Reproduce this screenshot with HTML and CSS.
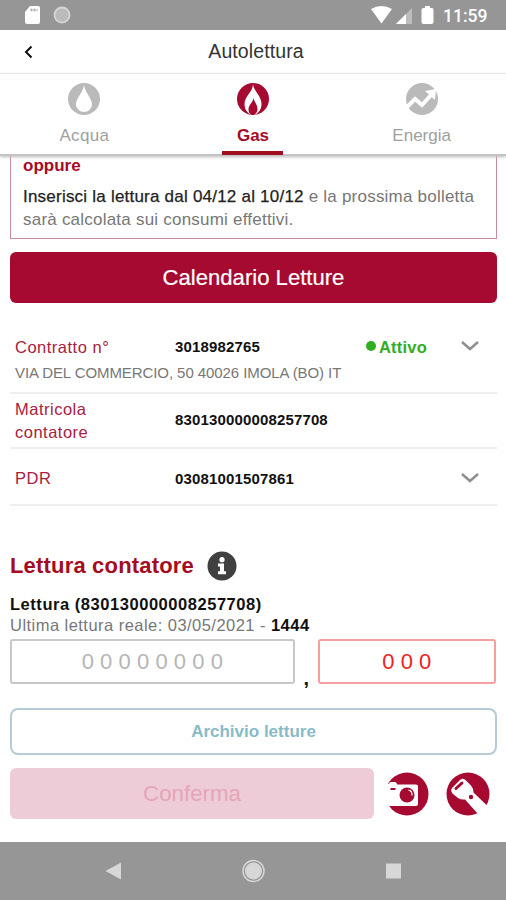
FILE: index.html
```html
<!DOCTYPE html>
<html lang="it">
<head>
<meta charset="utf-8">
<title>Autolettura</title>
<link rel="stylesheet" href="styles.css">
</head>
<body>
<div class="status">
  <svg class="status-left" width="60" height="30" viewBox="0 0 60 30"><path fill="#fff" d="M10 6h8q2 0 2 2v14q0 2-2 2H7q-2 0-2-2V12z"/><path stroke="#aaa" stroke-width="2.5" stroke-dasharray="2 1" d="M10.500 10h7"/><circle cx="42" cy="15" r="7.500" fill="#bbb" stroke="#d5d5d5" stroke-width="1.800"/></svg>
  <svg class="status-right" width="70" height="30" viewBox="0 0 70 30"><path fill="#fff" d="M3 9q10.500-6 21 0L13.500 23.500z"/><path fill="#bdbdbd" d="M44 8v16H28z"/><path fill="#fff" d="M38 14v10H28z"/><path fill="#fff" d="M57 6h5v2h2q1.500 0 1.500 2v12q0 2-2 2h-8q-2 0-2-2V10q0-2 2-2H57z"/></svg>
  <span class="clock">11:59</span>
</div>
<header class="topbar">
  <svg class="back" width="10" height="14" viewBox="0 0 10 14"><path d="M7.500 1.500 2 7l5.500 5.500" fill="none" stroke="#111" stroke-width="2"/></svg>
  <h1>Autolettura</h1>
</header>
<nav class="tabs">
  <div class="tab"><svg width="32" height="32" viewBox="0 0 32 32"><circle cx="16" cy="16" r="16" fill="#bababa"/><path fill="#fff" d="M16 1.500C15.500 9 8 15 8 21.500a8 7.500 0 0 0 16 0C24 15 16.500 9 16 1.500z"/></svg><span class="acqua">Acqua</span></div>
  <div class="tab active"><svg width="32" height="32" viewBox="0 0 32 32"><circle cx="16" cy="16" r="16" fill="#a70a30"/><path fill="#fff" d="M16 1c.5 7 8.500 12 8.500 20 0 5-2.500 8.500-6 10.500h-5C10 29.500 7.500 26 7.500 21 7.500 13 16 9 16 1z"/><path fill="#a70a30" d="M16.500 14c-.5 4 4 7 4 12 0 3-1.500 5-4 6-3 0-5-2-5-5.500 0-5 5-7 5-12.500z"/></svg><span>Gas</span></div>
  <div class="tab"><svg width="32" height="32" viewBox="0 0 32 32"><circle cx="16" cy="16" r="16" fill="#bababa"/><path d="m1 24 8-8 7 6 10-11" fill="none" stroke="#fff" stroke-width="4"/><path fill="#fff" d="m19 8 11-2-1 11z"/></svg><span>Energia</span></div>
</nav>
<main>
  <section class="notice">
    <strong>oppure</strong>
    <p><b>Inserisci la lettura dal 04/12 al 10/12</b> e la prossima bolletta<br>sarà calcolata sui consumi effettivi.</p>
  </section>
  <button class="primary">Calendario Letture</button>
  <section class="details">
    <div class="row contract">
      <span class="label">Contratto n°</span><span class="value">3018982765</span>
      <span class="state"><i></i><span>Attivo</span></span>
      <svg class="chev" width="20" height="12" viewBox="0 0 20 12"><path d="m2 2 8 7 8-7" fill="none" stroke="#8f8f8f" stroke-width="2.500"/></svg>
      <span class="address">VIA DEL COMMERCIO, 50 40026 IMOLA (BO) IT</span>
    </div>
    <div class="row meter"><span class="label">Matricola<br>contatore</span><span class="value">830130000008257708</span></div>
    <div class="row pdr"><span class="label">PDR</span><span class="value">03081001507861</span>
      <svg class="chev" width="20" height="12" viewBox="0 0 20 12"><path d="m2 2 8 7 8-7" fill="none" stroke="#8f8f8f" stroke-width="2.500"/></svg>
    </div>
  </section>
  <section class="reading">
    <h2>Lettura contatore<svg width="30" height="30" viewBox="0 0 30 30"><circle cx="15" cy="15" r="14.500" fill="#404040"/><circle cx="15" cy="8.700" r="2.600" fill="#fff"/><path fill="#fff" d="M11 12.500h6v7.700h2v3h-8v-3h2v-4.700h-2z"/></svg></h2>
    <strong class="meter-title">Lettura (830130000008257708)</strong>
    <span class="last">Ultima lettura reale: 03/05/2021 - <b>1444</b></span>
    <div class="fields"><div class="field whole"><span>00000000</span></div><b class="comma">,</b><div class="field decimal"><span>000</span></div></div>
  </section>
  <button class="outline">Archivio letture</button>
  <div class="actions">
    <button class="confirm">Conferma</button>
    <svg class="camera" width="43" height="44" viewBox="0 0 43 44"><circle cx="21" cy="22" r="21.500" fill="#a70a30"/><path fill="#fff" d="M-1 12H3q0-2 2-2h4q2 0 2 2.500h19q2 0 2 2V32q0 2-2 2H-1z"/><path fill="#a70a30" d="M4.500 16h5v2h-5z"/><circle cx="21" cy="23" r="7.500" fill="#a70a30"/><path d="M22.500 18q4 1 3.500 5.500" fill="none" stroke="#fff" stroke-width="1.200"/></svg>
    <svg class="torch" width="44" height="44" viewBox="0 0 44 44"><circle cx="22" cy="22" r="21.500" fill="#a70a30"/><path fill="#fff" d="M6 16Q4 19 7 22l5 4q3 2 7 1.500L32 42l11-6.500-15.500-15q0-4-2.500-7l-5-5q-3-3-6-.5z"/><path d="m10 16.500 6-5.500" stroke="#a70a30" stroke-width="3" stroke-linecap="round"/><circle cx="25" cy="25" r="2.200" fill="#a70a30"/></svg>
  </div>
</main>
<footer class="navbar">
  <svg width="506" height="58" viewBox="0 0 506 58"><g fill="#d7d7d7"><path d="M105.500 29 121 20.500v17z"/><circle cx="253.500" cy="29" r="8.500"/><circle cx="253.500" cy="29" r="10.500" fill="none" stroke="#d7d7d7" stroke-width="1.500"/><path d="M386 21.500h15v15h-15z"/></g></svg>
</footer>
</body>
</html>
```
FILE: styles.css
```css
* { box-sizing: border-box; }
body { margin: 0; width: 506px; height: 900px; overflow: hidden; display: flex; flex-direction: column; background: #fff; font-family: "Liberation Sans", Arial, sans-serif; color: #777; }
button { font: inherit; padding: 0; display: flex; align-items: center; justify-content: center; }
svg { display: block; flex: none; }
.status { height: 30px; flex: none; background: #969696; display: flex; align-items: center; padding-left: 20px; }
.status-right { margin-left: 288px; }
.clock { margin: 2px 0 0 5px; font: 500 17.5px/30px Roboto, sans-serif; color: #fff; white-space: nowrap; }
.topbar { height: 44px; flex: none; display: flex; align-items: center; border-bottom: 1px solid #eee; padding: 0 24px; }
h1 { margin: 0; flex: 1; padding-right: 4px; text-align: center; font-size: 19.5px; letter-spacing: .1px; font-weight: 400; color: #333; }
.tabs { height: 82px; flex: none; display: grid; grid-template-columns: repeat(3, 1fr); border-bottom: 2px solid #c4c4c4; box-shadow: 0 1px 3px #bbb; position: relative; z-index: 1; }
.tab { display: flex; flex-direction: column; align-items: center; padding-top: 9px; font-size: 17px; line-height: 20px; gap: 11px; color: #a0a0a0; }
.acqua { letter-spacing: .3px; }
.tab.active { color: #a70a26; font-weight: 700; }
.tab.active::after { content: ""; width: 61px; height: 4px; margin-top: -6px; background: #a00f20; }
main { flex: 1; padding: 0 10px; }
.notice { width: 487px; height: 83px; border: 1px solid #c98d99; border-top: 0; padding: 0 12px; font-size: 17px; line-height: 23px; white-space: nowrap; }
.notice strong { display: block; line-height: 20px; color: #a70a26; }
.notice p { margin: 9px 0 0; letter-spacing: .22px; }
.notice b { font-weight: 400; color: #222; -webkit-text-stroke: .25px #222; }
.primary { width: 487px; height: 51px; margin-top: 13px; border: 0; border-radius: 6px; background: #a60a30; color: #fff; font-size: 22.1px; -webkit-text-stroke: .2px #fff; }
.details { margin-top: 25px; font-size: 16.5px; }
.row { display: grid; grid-template-columns: 160px 191px 94px 20px; align-items: center; width: 487px; padding-left: 5px; border-bottom: 2px solid #eee; white-space: nowrap; }
.contract { height: 66px; grid-template-rows: 30px 22px; align-content: start; padding-top: 3px; }
.contract .label, .state { padding-top: 3px; }
.meter { height: 55px; line-height: 22.5px; }
.pdr { height: 57px; padding-top: 3px; }
.pdr .chev { grid-column: 4; }
.label { color: #a9203e; letter-spacing: .5px; }
.value { color: #111; font-weight: 700; font-size: 15px; letter-spacing: .15px; }
.state { display: flex; align-items: center; gap: 3px; color: #30ae20; font-weight: 700; letter-spacing: .2px; }
.state i { width: 10px; height: 10px; margin-top: -3px; border-radius: 50%; background: #30ae20; }
.address { grid-column: 1 / -1; font-size: 15px; letter-spacing: -.08px; }
.reading { margin-top: 43px; }
h2 { display: flex; align-items: center; gap: 13px; height: 34px; margin: 0; color: #a50c20; font-size: 22px; letter-spacing: .18px; }
.meter-title, .last { display: block; font-size: 16.5px; line-height: 22px; white-space: nowrap; }
.meter-title { margin-top: 10px; color: #111; letter-spacing: .54px; }
.last { margin-top: -1px; letter-spacing: .46px; }
.last b { color: #111; }
.fields { display: flex; height: 45px; margin-top: 3px; align-items: flex-end; }
.field { height: 45px; border: 2px solid #c8c8c8; border-radius: 3px; display: flex; align-items: center; justify-content: center; font-size: 22px; letter-spacing: 6.2px; color: #b5b5b5; }
.field span { margin-right: -6px; }
.whole { width: 286px; }
.decimal { width: 179px; border-color: #f4a0a0; color: #e22; }
.comma { width: 23px; margin-bottom: -1px; text-align: center; font-size: 20px; line-height: 14px; color: #111; }
.outline { width: 487px; height: 47px; margin-top: 24px; border: 2px solid #b6cbd5; border-radius: 8px; background: #fff; color: #88bbc9; font-size: 17px; font-weight: 700; }
.actions { display: flex; align-items: center; margin-top: 13px; }
.confirm { width: 364px; height: 51px; border: 0; border-radius: 6px; background: #edccd7; color: #e5a5b8; font-size: 22.3px; }
.camera { margin-left: 12px; }
.torch { margin-left: 17px; }
.navbar { flex: none; height: 58px; background: #969696; }
```
